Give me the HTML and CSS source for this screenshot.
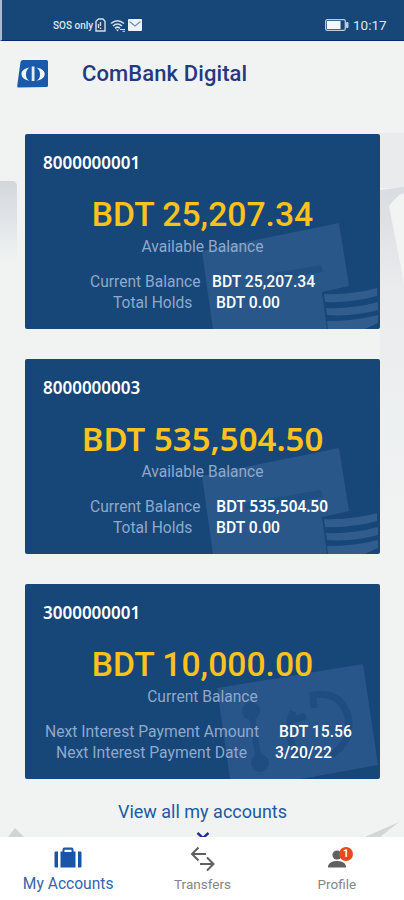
FILE: index.html
```html
<!DOCTYPE html>
<html lang="en">
<head>
  <meta charset="UTF-8" />
  <meta name="viewport" content="width=device-width, initial-scale=1.0"/>
  <title>ComBank Digital</title>
  <link rel="stylesheet" href="styles.css">
</head>
<body>
  <div class="status-bar">
    <span class="carrier">SOS only</span>
    <svg class="sim" width="11" height="14" viewBox="0 0 11 14">
      <path d="M3.5 1H8l2 2.2V13H1V3.2Z" fill="none" stroke="#d3dfeb" stroke-width="1.4"/>
      <path d="M5.500 4v4M5.500 9.500v1.500M3.500 6v4" stroke="#d3dfeb" stroke-width="1.3"/>
    </svg>
    <svg class="wifi" width="16" height="13" viewBox="0 0 16 13">
      <path d="M1 4.5Q7.500-1 14 4.500M3 7Q7.500 3 12 7M5 9.300Q7.500 7 10 9.300" fill="none" stroke="#d3dfeb" stroke-width="1.6"/>
      <path d="M6 10.500h3L7.500 12.500Z" fill="#d3dfeb"/>
      <path d="M10 10.500h5M12.500 12.200h2.500" stroke="#d3dfeb" stroke-width="1.100"/>
    </svg>
    <svg class="mail" width="14" height="12" viewBox="0 0 14 12">
      <rect width="14" height="12" rx="1" fill="#eef3f8"/>
      <path d="M1.500 2.500L7 7l5.500-4.500" fill="none" stroke="#6f8fb4" stroke-width="1.200"/>
    </svg>
    <svg class="battery" width="24" height="12" viewBox="0 0 24 12">
      <rect x=".7" y=".7" width="19.600" height="10.600" rx="1.500" fill="none" stroke="#b9cbe0" stroke-width="1.300"/>
      <rect x="2" y="2" width="13.500" height="8" fill="#f4f7fa"/>
      <rect x="21" y="3" width="2.500" height="6" rx=".8" fill="#b9cbe0"/>
    </svg>
    <span class="clock">10:17</span>
  </div>

  <div class="header">
    <svg class="logo" width="31" height="28" viewBox="0 0 31 28">
      <path d="M6 0H29.500Q31 0 31 1.500V25.500Q31 27 29.500 27L1.500 27.500Q0 27.500 .2 26L3.500 2Q4 0 6 0Z" fill="#1a5aaa"/>
      <path d="M12.500 7.500C7 8.500 4.500 11 4.500 14s2.500 5.800 8 6.800C9.500 19 9 17 9 14.200s.8-4.900 3.500-6.700ZM19.500 7.500c5.500 1 8.200 3.500 8.200 6.500s-2.700 5.800-8.200 6.800c2.900-1.800 3.500-3.800 3.500-6.600s-.8-4.900-3.500-6.700Z" fill="#f1f6fb"/>
      <rect x="14.700" y="6.500" width="2.800" height="14.500" fill="#e4edf7"/>
    </svg>
    <h1>ComBank Digital</h1>
  </div>

  <div class="content">
    <svg class="backdrop" width="404" height="746" viewBox="0 0 404 746">
      <defs>
        <linearGradient id="fade" x1="0" y1="0" x2="0" y2="1">
          <stop offset="0" stop-color="#d3d6dc"/>
          <stop offset="1" stop-color="#f0f3f2"/>
        </linearGradient>
        <linearGradient id="fadeRight" x1="0" y1="0" x2="0" y2="1">
          <stop offset="0" stop-color="#d9dce0"/>
          <stop offset=".3" stop-color="#e9ebed"/>
          <stop offset="1" stop-color="#f0f3f2"/>
        </linearGradient>
      </defs>
      <path d="M0 90H13Q17 91 17 95V170H0Z" fill="url(#fade)"/>
      <path d="M380 42H404V97H380Z" fill="#e9ebec"/>
      <path d="M380 99L404 96V420H380Z" fill="url(#fadeRight)"/>
      <path d="M389 115Q397 104 404 102V193Z" fill="#f2f3f3"/>
      <path d="M8 746L15 737L24 746Z" fill="#d1d3d6"/>
      <path d="M365 746L399 731L380 746Z" fill="#d3d5d8"/>
    </svg>

    <div class="card">
      <svg class="watermark" width="355" height="195" viewBox="0 0 355 195">
        <path d="M177 117L314 89L324 152L297 158L302 195H188Z" fill="#2a578a"/>
        <path d="M248 139L296 131L298 138L250 146Z" fill="#204f82"/>
        <path d="M299 160Q327 161 352 154V162Q327 169 300 168ZM301 174Q328 175 353 168V176Q328 183 302 181ZM302 187Q330 187 353 181V189L340 195H303Z" fill="#305c8e"/>
      </svg>
      <div class="account">8000000001</div>
      <div class="amount">BDT 25,207.34</div>
      <div class="caption">Available Balance</div>
      <div class="row row-balance"><span class="label">Current Balance</span><span class="value">BDT 25,207.34</span></div>
      <div class="row row-holds"><span class="label">Total Holds</span><span class="value">BDT 0.00</span></div>
    </div>

    <div class="card card-wide">
      <svg class="watermark" width="355" height="195" viewBox="0 0 355 195">
        <path d="M177 117L314 89L324 152L297 158L302 195H188Z" fill="#2a578a"/>
        <path d="M218 144L296 131L298 138L220 151Z" fill="#204f82"/>
        <path d="M299 160Q327 161 352 154V162Q327 169 300 168ZM301 174Q328 175 353 168V176Q328 183 302 181ZM302 187Q330 187 353 181V189L340 195H303Z" fill="#305c8e"/>
      </svg>
      <div class="account">8000000003</div>
      <div class="amount">BDT 535,504.50</div>
      <div class="caption">Available Balance</div>
      <div class="row row-balance"><span class="label">Current Balance</span><span class="value">BDT 535,504.50</span></div>
      <div class="row row-holds"><span class="label">Total Holds</span><span class="value">BDT 0.00</span></div>
    </div>

    <div class="card">
      <svg class="watermark" width="355" height="195" viewBox="0 0 355 195">
        <path d="M192 104L338 80L353 181L276 195H205Z" fill="#28558a"/>
        <g fill="none" stroke="#1f4d81" stroke-width="7">
          <path d="M226 127L234 178" stroke-width="6"/>
          <path d="M289 124L288 111Q315 106 323 132Q328 158 306 171"/>
          <path d="M268 127Q260 150 270 166Q276 172 286 172M267 136L281 132"/>
        </g>
        <circle cx="226" cy="127" r="9" fill="#1f4d81"/>
        <circle cx="235" cy="179" r="9" fill="#1f4d81"/>
      </svg>
      <div class="account">3000000001</div>
      <div class="amount">BDT 10,000.00</div>
      <div class="caption">Current Balance</div>
      <div class="row row-interest"><span class="label">Next Interest Payment Amount</span><span class="value">BDT 15.56</span></div>
      <div class="row row-date"><span class="label">Next Interest Payment Date</span><span class="value">3/20/22</span></div>
    </div>

    <div class="view-all">
      <span>View all my accounts</span>
      <svg width="14" height="8" viewBox="0 0 14 8"><path d="M1.500 1L7 6L12.500 1" fill="none" stroke="#1b2f8f" stroke-width="2.400"/></svg>
    </div>
  </div>

  <div class="tabs">
    <div class="tab tab-accounts">
      <svg width="28" height="22" viewBox="0 0 28 22">
        <path d="M.5 5.500Q.5 4.500 1.500 4.500H4V20.500H1.500Q.5 20.500 .5 19.500ZM24 4.500h2.500q1 0 1 1V19.500q0 1-1 1H24Z" fill="#1857a7"/>
        <path d="M6.500 4.500H8.500V2.500Q8.500 .5 10.500 .5h7Q19.500 .5 19.500 2.500v2h2V20.500h-15ZM10.500 5h7V2.800H10.500Z" fill="#1857a7" fill-rule="evenodd"/>
      </svg>
      <span>My Accounts</span>
    </div>
    <div class="tab tab-transfers">
      <svg width="26" height="26" viewBox="0 0 26 26" fill="none" stroke="#606060" stroke-width="2">
        <path d="M17 8H3M9.500 1.500L3 8l6.500 6.500M11 18H24M18 11.500L24.500 18L18 24.500"/>
      </svg>
      <span>Transfers</span>
    </div>
    <div class="tab tab-profile">
      <div class="profile-icon">
        <svg width="18" height="18" viewBox="0 0 18 18" fill="#606060">
          <circle cx="9" cy="5" r="4.600"/>
          <path d="M0 17.500V16Q1.500 11 9 11T18 16v1.500Z"/>
        </svg>
        <span class="badge">1</span>
      </div>
      <span>Profile</span>
    </div>
  </div>
</body>
</html>
```

FILE: styles.css
```css
* {
  box-sizing: border-box;
}
body {
  margin: 0;
  width: 404px;
  height: 900px;
  overflow: hidden;
  display: flex;
  flex-direction: column;
  font-family: Roboto, "Liberation Sans", sans-serif;
  background: #f0f3f2;
}
svg {
  display: block;
  flex: none;
}
.status-bar {
  height: 41px;
  flex: none;
  display: flex;
  align-items: center;
  padding: 10px 17px 0 51px;
  border-left: 2px solid #a9b8cf;
  border-bottom: 1px solid #0b2470;
  background: #174679;
  color: #dde6ef;
}
.carrier {
  width: 42px;
  font-size: 10px;
  font-weight: 500;
  white-space: nowrap;
}
.wifi {
  margin-left: 4px;
}
.mail {
  margin-left: 2px;
}
.battery {
  margin-left: auto;
}
.clock {
  width: 34px;
  margin-left: 4px;
  font-size: 13.5px;
}
.header {
  height: 65px;
  flex: none;
  display: flex;
  align-items: center;
  padding-left: 17px;
}
h1 {
  margin: 0 0 0 34px;
  font-size: 22px;
  font-weight: 500;
  letter-spacing: 0.1px;
  color: #26397d;
}
.content {
  position: relative;
  height: 731px;
  flex: none;
  overflow: hidden;
  padding: 28px 24px 0 25px;
}
.backdrop {
  position: absolute;
  top: -15px;
  left: 0;
}
.card {
  position: relative;
  height: 195px;
  margin-bottom: 30px;
  padding: 18px 0 0;
  overflow: hidden;
  border-radius: 2px;
  background: #174679;
  color: #fff;
  white-space: nowrap;
}
.watermark {
  position: absolute;
  top: 0;
  left: 0;
}
.account,
.amount,
.caption,
.row {
  position: relative;
}
.account {
  padding-left: 18px;
  font-family: "Noto Sans", sans-serif;
  font-size: 17px;
  font-weight: 600;
  line-height: 22px;
}
.amount {
  height: 40px;
  margin-top: 20px;
  font-size: 33.7px;
  font-weight: 500;
  line-height: 42px;
  text-align: center;
  color: #fbc21c;
}
.caption {
  margin-top: 3px;
  font-size: 15.6px;
  line-height: 20px;
  text-align: center;
  color: #8fa9cc;
}
.row {
  display: flex;
  align-items: baseline;
  height: 21px;
  font-size: 15.7px;
  line-height: 21px;
}
.caption + .row {
  margin-top: 14px;
}
.label {
  flex: none;
  font-size: 15.6px;
  color: #8fa9cc;
}
.value {
  font-weight: 500;
}
.row-balance {
  padding-left: 65px;
}
.row-balance .label {
  width: 122px;
}
.row-holds {
  padding-left: 88px;
}
.row-holds .label {
  width: 103px;
}
.row-interest {
  padding-left: 20px;
}
.row-interest .label {
  width: 234px;
  font-size: 15.7px;
}
.row-date {
  padding-left: 31px;
}
.row-date .label {
  width: 219px;
  font-size: 15.7px;
}
.card-wide .amount,
.card-wide .row-balance .value {
  font-family: "Noto Sans", sans-serif;
  font-weight: 600;
}
.card-wide .amount {
  font-size: 33px;
  line-height: 40px;
}
.card-wide .row-balance .value {
  font-size: 15.3px;
}
.card-wide .row-balance .label {
  width: 126px;
}
.view-all {
  display: flex;
  flex-direction: column;
  align-items: center;
  margin-top: -8px;
  font-size: 18px;
  line-height: 22px;
  color: #2259a0;
}
.view-all svg {
  margin-top: 9px;
}
.tabs {
  height: 63px;
  flex: none;
  display: flex;
  background: #fff;
}
.tab {
  flex: 1;
  display: flex;
  flex-direction: column;
  align-items: center;
  font-size: 13.5px;
  line-height: 18px;
  color: #858585;
}
.tab-accounts {
  padding: 10px 0 0 1px;
  font-size: 15.6px;
  color: #3565ac;
}
.tab-accounts span {
  margin-top: 6px;
}
.tab-transfers {
  padding-top: 9px;
}
.tab-transfers span {
  margin-top: 3px;
}
.profile-icon {
  position: relative;
  margin-top: 13px;
}
.tab-profile > span {
  margin-top: 7px;
}
.badge {
  position: absolute;
  top: -3px;
  left: 11px;
  width: 14px;
  height: 14px;
  border-radius: 50%;
  background: #e8481c;
  color: #fff;
  font-size: 10px;
  font-weight: 700;
  line-height: 14px;
  text-align: center;
}
```
